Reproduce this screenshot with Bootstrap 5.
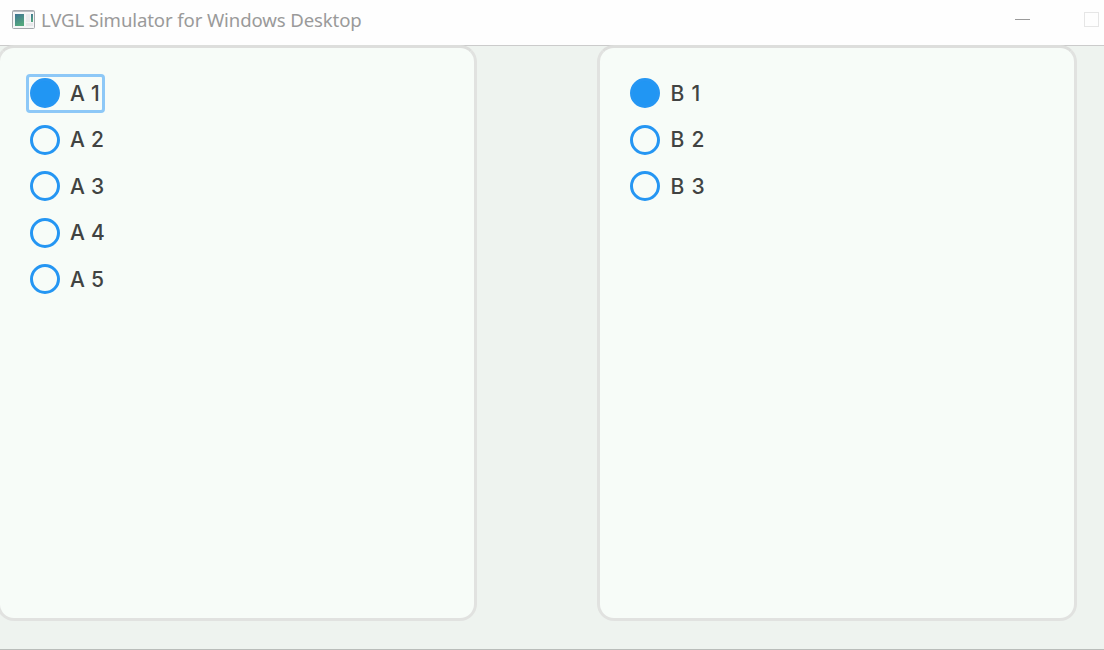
<!DOCTYPE html>
<html lang="en">

<head>
    <meta charset="UTF-8">
    <meta name="viewport" content="width=device-width, initial-scale=1">
    <title>LVGL Simulator for Windows Desktop</title>
    <link rel="stylesheet" href="https://cdn.jsdelivr.net/npm/bootstrap@5.3.0/dist/css/bootstrap.min.css">
    <style>
        body {
            height: 650px;
            background: #eef3ef;
        }
        .titlebar {
            height: 46px;
            padding: 0 5px 6px 12px;
            background: #fefefe;
            border-bottom: 1px solid #cbcbcb;
        }
        .titlebar h1 {
            margin-left: 6px;
            font: 400 18.6px/24px "Noto Sans", sans-serif;
            letter-spacing: -0.12px;
            color: #9a9a9a;
        }
        .window-buttons {
            gap: 54px;
        }
        .screen {
            gap: 120px;
            margin-left: -3px;
            border-bottom: 1px solid #b9bdba;
        }
        .panel {
            width: 480px;
            height: 576px;
            margin-top: -1px;
            padding: 25.5px 26px;
            background: #f7fcf8;
            border: 3px solid #e1e2e0;
            border-top-color: #dddedc;
            border-radius: 17px;
        }
        .option {
            width: fit-content;
            height: 39px;
            margin-bottom: 7.5px;
            padding: 0 2px 0 1px;
            gap: 10px;
            border: 3px solid transparent;
            border-radius: 4px;
            font: 500 21px/30px Inter, sans-serif;
            color: #414342;
            cursor: pointer;
        }
        .option span {
            padding-top: 1px;
            letter-spacing: 0.3px;
        }
        .group-b .option {
            gap: 10.5px;
        }
        .group-b .option span {
            letter-spacing: 0.8px;
        }
        .option.focused {
            border-color: #8dc8f7;
        }
        .option .form-check-input {
            width: 30px;
            height: 30px;
            border: 3px solid #2596f3;
            background: transparent;
            box-shadow: none;
        }
        .option .form-check-input:checked {
            background: #2196f3;
        }
    </style>
</head>

<body class="d-flex flex-column overflow-hidden">

    <header class="titlebar d-flex align-items-center flex-shrink-0">
        <svg width="23" height="19" viewBox="0 0 23 19">
            <defs>
                <linearGradient id="shade" x1="0" y1="0" x2="0.4" y2="1">
                    <stop offset="0" stop-color="#3f7393" />
                    <stop offset="1" stop-color="#53a77e" />
                </linearGradient>
            </defs>
            <rect x="0.5" y="0.5" width="22" height="18" rx="1" fill="#f5f6f7" stroke="#a5a8ad" />
            <path d="M1 1.5h21" stroke="#b9bcc2" />
            <rect x="3" y="4" width="9" height="12" fill="url(#shade)" />
            <rect x="14" y="4" width="4" height="8" fill="#eaebed" />
            <rect x="19" y="4" width="2" height="8" fill="url(#shade)" />
            <rect x="14" y="13" width="7" height="3" fill="#e7e8ea" />
        </svg>
        <h1 class="mb-0">LVGL Simulator for Windows Desktop</h1>
        <div class="window-buttons d-flex ms-auto">
            <svg width="15" height="15"><path d="M0 7.5h15" stroke="#9a9a9a" /></svg>
            <svg width="15" height="15"><rect x="0.5" y="0.5" width="14" height="14" fill="none" stroke="#e6e6e6" /></svg>
        </div>
    </header>

    <main class="screen d-flex flex-grow-1">
        <section class="panel flex-shrink-0">
            <label class="option focused d-flex align-items-center"><input class="form-check-input m-0" type="radio" name="groupA" checked><span>A 1</span></label>
            <label class="option d-flex align-items-center"><input class="form-check-input m-0" type="radio" name="groupA"><span>A 2</span></label>
            <label class="option d-flex align-items-center"><input class="form-check-input m-0" type="radio" name="groupA"><span>A 3</span></label>
            <label class="option d-flex align-items-center"><input class="form-check-input m-0" type="radio" name="groupA"><span>A 4</span></label>
            <label class="option d-flex align-items-center"><input class="form-check-input m-0" type="radio" name="groupA"><span>A 5</span></label>
        </section>
        <section class="panel group-b flex-shrink-0">
            <label class="option d-flex align-items-center"><input class="form-check-input m-0" type="radio" name="groupB" checked><span>B 1</span></label>
            <label class="option d-flex align-items-center"><input class="form-check-input m-0" type="radio" name="groupB"><span>B 2</span></label>
            <label class="option d-flex align-items-center"><input class="form-check-input m-0" type="radio" name="groupB"><span>B 3</span></label>
        </section>
    </main>

    <script src="https://cdn.jsdelivr.net/npm/bootstrap@5.3.0/dist/js/bootstrap.bundle.min.js"></script>
</body>

</html>
